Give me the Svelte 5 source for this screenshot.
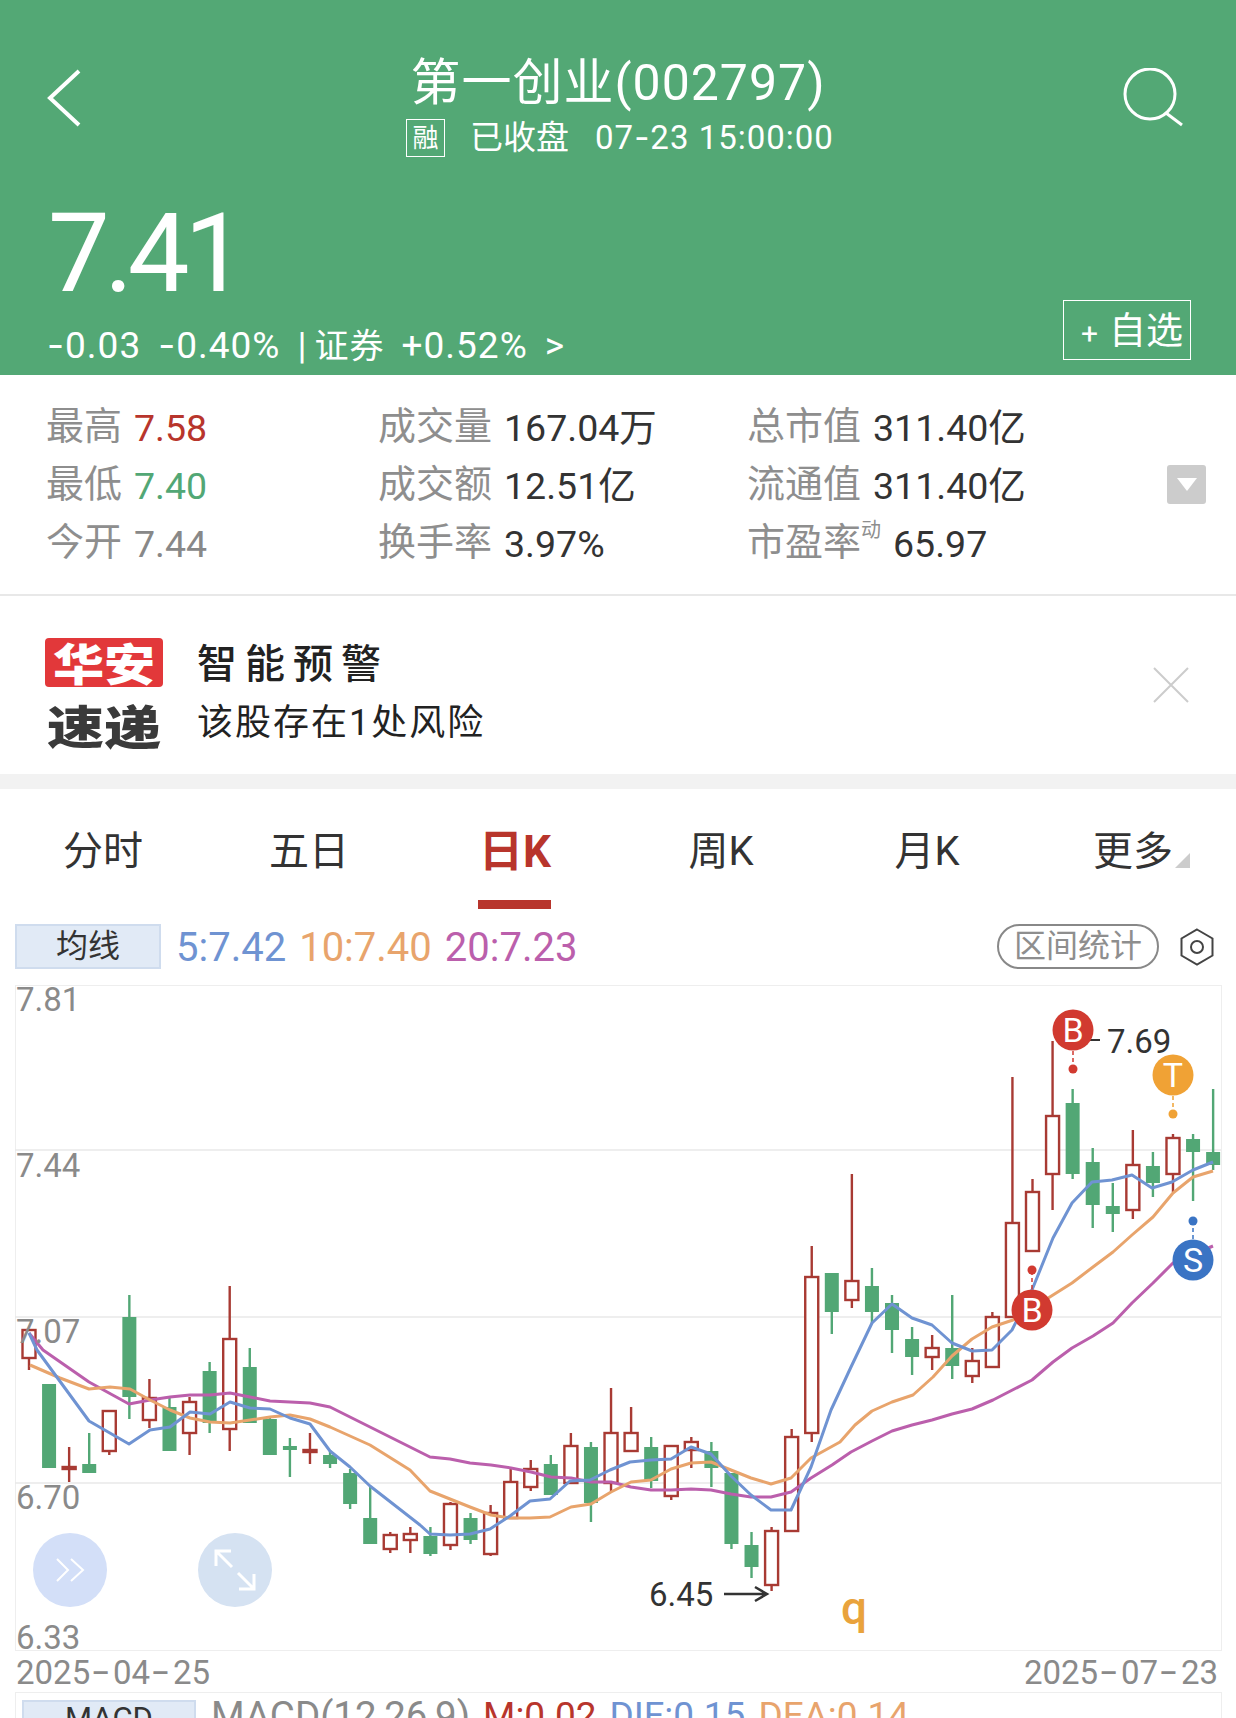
<script>
  // x position of candle i on the 20px grid
  const cx = (i) => 29 + 20.07 * i;

  // [up, wickTop, bodyTop, bodyBottom, wickBottom]
  const candles = [
    [1, 1330, 1330, 1358, 1370], [0, 1384, 1384, 1468, 1468], [1, 1447, 1467, 1469, 1482], [0, 1433, 1464, 1473, 1473],
    [1, 1411, 1411, 1451, 1455], [0, 1295, 1317, 1397, 1419], [1, 1379, 1398, 1420, 1428], [0, 1398, 1407, 1451, 1451],
    [1, 1397, 1402, 1433, 1455], [0, 1362, 1371, 1423, 1433], [1, 1286, 1339, 1429, 1451], [0, 1348, 1367, 1423, 1423],
    [0, 1416, 1419, 1455, 1455], [0, 1438, 1446, 1450, 1477], [1, 1433, 1450, 1452, 1464], [0, 1450, 1455, 1464, 1468],
    [0, 1469, 1473, 1504, 1509], [0, 1487, 1518, 1544, 1544], [1, 1532, 1535, 1549, 1553], [1, 1527, 1534, 1540, 1553],
    [0, 1527, 1536, 1554, 1556], [1, 1502, 1504, 1545, 1550], [0, 1513, 1518, 1540, 1544], [1, 1505, 1513, 1554, 1556],
    [1, 1469, 1482, 1518, 1518], [1, 1460, 1469, 1487, 1491], [0, 1455, 1464, 1495, 1495], [1, 1433, 1446, 1483, 1483],
    [0, 1442, 1447, 1503, 1522], [1, 1388, 1433, 1483, 1491], [1, 1407, 1433, 1451, 1451], [0, 1437, 1447, 1481, 1488],
    [1, 1446, 1446, 1496, 1500], [1, 1437, 1442, 1450, 1468], [0, 1442, 1451, 1468, 1487], [0, 1473, 1473, 1544, 1549],
    [0, 1532, 1545, 1567, 1578], [1, 1527, 1531, 1585, 1591], [1, 1429, 1437, 1531, 1531], [1, 1246, 1277, 1433, 1442],
    [0, 1273, 1273, 1312, 1334], [1, 1174, 1281, 1300, 1308], [0, 1268, 1286, 1312, 1323], [0, 1295, 1303, 1330, 1353],
    [0, 1327, 1339, 1357, 1375], [1, 1335, 1348, 1357, 1370], [0, 1295, 1348, 1366, 1379], [1, 1348, 1361, 1376, 1383],
    [1, 1312, 1317, 1367, 1367], [1, 1077, 1223, 1317, 1317], [1, 1179, 1192, 1251, 1251], [1, 1041, 1116, 1174, 1210],
    [0, 1089, 1103, 1174, 1179], [0, 1148, 1162, 1205, 1228], [0, 1183, 1206, 1214, 1232], [1, 1130, 1165, 1210, 1219],
    [0, 1152, 1166, 1183, 1197], [1, 1134, 1138, 1174, 1192], [0, 1134, 1139, 1152, 1201], [0, 1089, 1152, 1165, 1170],
  ];

  const ma5 = "29,1333 37,1350 89,1421 129,1444 150,1430 170,1427 190,1412 210,1414 230,1402 250,1408 270,1409 290,1418 310,1424 330,1451 350,1467 370,1486 420,1525 430,1534 450,1535 470,1534 490,1529 510,1516 530,1501 550,1499 570,1481 590,1480 610,1470 630,1462 651,1460 671,1459 691,1447 711,1454 731,1476 751,1495 771,1510 791,1510 811,1467 831,1410 851,1367 872,1323 892,1304 912,1318 932,1325 952,1343 972,1351 992,1350 1012,1330 1032,1290 1053,1238 1072,1203 1092,1182 1112,1180 1132,1175 1152,1188 1172,1182 1193,1170 1213,1162";
  const ma10 = "30,1365 60,1378 89,1389 110,1387 130,1389 150,1400 170,1410 190,1418 210,1422 230,1423 250,1420 270,1417 290,1415 310,1419 330,1427 350,1436 370,1445 410,1470 430,1491 450,1499 470,1507 491,1515 510,1518 530,1518 550,1517 571,1507 591,1504 611,1492 631,1482 651,1480 671,1469 691,1463 711,1462 731,1470 751,1478 771,1484 791,1478 811,1458 840,1442 855,1425 872,1411 892,1402 913,1395 933,1377 952,1356 972,1339 992,1327 1013,1320 1053,1295 1072,1283 1093,1267 1113,1252 1132,1235 1153,1217 1173,1193 1193,1177 1213,1171";
  const ma20 = "29,1333 43,1350 89,1382 129,1404 150,1400 170,1397 190,1395 210,1395 230,1393 250,1397 270,1401 290,1402 310,1403 330,1407 350,1417 370,1427 390,1437 420,1452 430,1457 450,1459 470,1463 491,1465 511,1468 531,1472 551,1477 571,1478 591,1482 611,1482 631,1487 651,1490 671,1490 691,1489 711,1490 731,1494 751,1497 771,1497 791,1492 811,1478 832,1465 851,1452 872,1441 892,1431 912,1425 932,1420 952,1414 972,1409 993,1400 1032,1380 1053,1362 1072,1348 1093,1336 1113,1323 1132,1303 1153,1283 1173,1263 1213,1246";

  // chart svg starts at page y 975
  const top = 975;
  const axis = [["7.81", 1011], ["7.44", 1177], ["7.07", 1343], ["6.70", 1509], ["6.33", 1649]];
  const grid = [1150, 1317, 1483];
  const markers = [
    { x: 1073, y: 1030, dot: 1069, fill: "#d13a30", t: "B" },
    { x: 1173, y: 1075, dot: 1114, fill: "#f0a235", t: "T" },
    { x: 1193, y: 1260, dot: 1221, fill: "#3a74c4", t: "S" },
    { x: 1032, y: 1310, dot: 1270, fill: "#d13a30", t: "B" },
  ];

  const stats = [
    [{ l: "最高", v: "7.58", c: "up" }, { l: "成交量", v: "167.04万" }, { l: "总市值", v: "311.40亿" }],
    [{ l: "最低", v: "7.40", c: "down" }, { l: "成交额", v: "12.51亿" }, { l: "流通值", v: "311.40亿" }],
    [{ l: "今开", v: "7.44", c: "flat" }, { l: "换手率", v: "3.97%" }, { l: "市盈率", s: "动", v: "65.97" }],
  ];
  const tabs = ["分时", "五日", "日K", "周K", "月K", "更多"];
</script>

<div class="page">
  <header class="head">
    <div class="nav">
      <svg class="back" width="34" height="58" viewBox="0 0 34 58"><path d="M32 2 L3 29 L32 56" fill="none" stroke="#fff" stroke-width="4" /></svg>
      <div class="title">
        <div class="name">第一创业(002797)</div>
        <div class="sub"><span class="rong">融</span><span class="closed">已收盘</span><span class="time">07<span class="dash">-</span>23 15:00:00</span></div>
      </div>
      <svg class="search" width="62" height="60" viewBox="0 0 62 60"><circle cx="27" cy="26" r="25" fill="none" stroke="#fff" stroke-width="3" /><path d="M43 45 L59 57" stroke="#fff" stroke-width="3" /></svg>
    </div>
    <div class="price">7.41</div>
    <div class="change">
      <div class="delta">
        <span><span class="dash">-</span>0.03</span><span><span class="dash">-</span>0.40%</span><span class="sep">|</span><span class="sec">证券</span><span>+0.52%</span><span class="gt">&gt;</span>
      </div>
      <div class="add"><span class="plus">+</span>自选</div>
    </div>
  </header>

  <section class="stats">
    {#each stats as row}
      {#each row as s, i}
        <div class="stat col{i}">
          <span class="lab">{s.l}{#if s.s}<sup>{s.s}</sup>{/if}</span>
          <span class="val {s.c || ''}">{s.v}</span>
        </div>
      {/each}
    {/each}
    <div class="drop"><i></i></div>
  </section>

  <section class="ad">
    <div class="logo">
      <div class="hua"><span>华安</span></div>
      <div class="su"><span>速递</span></div>
    </div>
    <div class="ad-text">
      <div class="ad-h">智能预警</div>
      <div class="ad-s">该股存在1处风险</div>
    </div>
    <svg class="close" width="36" height="36" viewBox="0 0 36 36"><path d="M1 1 L35 35 M35 1 L1 35" stroke="#ccc" stroke-width="2" /></svg>
  </section>

  <nav class="tabs">
    {#each tabs as t, i}
      <div class="tab" class:on={i === 2}>{t}{#if i === 5}<b class="corner"></b>{/if}</div>
    {/each}
  </nav>

  <div class="ma">
    <div class="ma-btn">均线</div>
    <span class="m5">5:7.42</span><span class="m10">10:7.40</span><span class="m20">20:7.23</span>
    <div class="range">区间统计</div>
    <svg class="hex" width="34" height="38" viewBox="0 0 34 38"><path d="M17 1.5 L32.5 10.5 L32.5 27.5 L17 36.5 L1.5 27.5 L1.5 10.5 Z" fill="none" stroke="#444" stroke-width="2" /><circle cx="17" cy="19" r="6" fill="none" stroke="#444" stroke-width="2" /></svg>
  </div>

  <div class="chart">
    <svg width="1236" height="743" viewBox="0 {top} 1236 743">
      <rect x="15.5" y="985.5" width="1206" height="665" fill="none" stroke="#eee" />
      <rect x="15.5" y="1692.5" width="1206" height="60" fill="none" stroke="#eee" />
      {#each grid as y}
        <line x1="15" x2="1221" y1={y} y2={y} stroke="#e8e8e8" stroke-width="1.5" />
      {/each}

      {#each candles as c, i}
        {#if c[0]}
          <line x1={cx(i)} x2={cx(i)} y1={c[1]} y2={c[4]} stroke="#a83a33" stroke-width="2.4" />
          <rect x={cx(i) - 6.5} y={c[2]} width="13" height={c[3] - c[2]} fill="#fff" stroke="#a83a33" stroke-width="2.4" />
        {:else}
          <line x1={cx(i)} x2={cx(i)} y1={c[1]} y2={c[4]} stroke="#52a775" stroke-width="2.4" />
          <rect x={cx(i) - 7} y={c[2]} width="14" height={c[3] - c[2]} fill="#52a775" />
        {/if}
      {/each}

      <polyline points={ma20} fill="none" stroke="#bb5fac" stroke-width="3" stroke-linejoin="round" />
      <polyline points={ma10} fill="none" stroke="#e8a46c" stroke-width="3" stroke-linejoin="round" />
      <polyline points={ma5} fill="none" stroke="#6f93d2" stroke-width="3" stroke-linejoin="round" />

      {#each axis as a}
        <text x="16" y={a[1]} class="ax">{a[0]}</text>
      {/each}

      <line x1="1090" x2="1100" y1="1040" y2="1040" stroke="#333" stroke-width="2" />
      <text x="1107" y="1053" class="mark">7.69</text>
      <text x="649" y="1606" class="mark">6.45</text>
      <path d="M724 1594 L766 1594 M755 1587 L767 1594 L755 1601" fill="none" stroke="#333" stroke-width="2.5" />

      {#each markers as m}
        <line x1={m.x} x2={m.x} y1={m.y} y2={m.dot} stroke={m.fill} stroke-width="1.5" stroke-dasharray="4 3" />
        <circle cx={m.x} cy={m.dot} r="4.5" fill={m.fill} />
        <circle cx={m.x} cy={m.y} r="20.5" fill={m.fill} />
        <text x={m.x} y={m.y + 12} class="badge" text-anchor="middle">{m.t}</text>
      {/each}

      <text x="854" y="1624" class="q" text-anchor="middle">q</text>

      <text x="16" y="1684" class="ax">2025<tspan class="dash wide">-</tspan>04<tspan class="dash wide">-</tspan>25</text>
      <text x="1218" y="1684" class="ax" text-anchor="end">2025<tspan class="dash wide">-</tspan>07<tspan class="dash wide">-</tspan>23</text>
    </svg>

    <div class="round r1">
      <svg width="32" height="28" viewBox="0 0 32 28"><path d="M3 3 L14 14 L3 25 M17 3 L29 14 L17 25" fill="none" stroke="#fff" stroke-width="2" /></svg>
    </div>
    <div class="round r2">
      <svg width="44" height="44" viewBox="0 0 44 44"><path d="M3 18 L3 3 L18 3 M3 3 L19 19 M41 26 L41 41 L26 41 M41 41 L25 25" fill="none" stroke="#fff" stroke-width="3" /></svg>
    </div>

    <div class="macd">
      <div class="ma-btn">MACD</div>
      <span class="mg">MACD(12,26,9)</span><span class="mr">M:0.02</span><span class="mb">DIF:0.15</span><span class="mo">DEA:0.14</span>
    </div>
  </div>
</div>

<style>
  :global(body) {
    margin: 0;
    background: #fff;
  }
  .page {
    width: 1236px;
    height: 1718px;
    overflow: hidden;
    font-family: Roboto, "Noto Sans CJK SC", sans-serif;
    color: #333;
  }
  .dash {
    font-family: Inter, sans-serif;
  }
  .dash.wide {
    font-size: 46px;
    font-weight: 300;
    letter-spacing: 2px;
    baseline-shift: -3px;
  }

  .head {
    height: 375px;
    box-sizing: border-box;
    background: #53a875;
    color: #fff;
    padding: 0 45px 0 47px;
    display: flex;
    flex-direction: column;
  }
  .nav {
    display: flex;
    align-items: flex-start;
    justify-content: space-between;
    padding-top: 54px;
    height: 158px;
    box-sizing: border-box;
  }
  .back {
    margin-top: 15px;
  }
  .search {
    margin-top: 14px;
    margin-right: 6px;
  }
  .title {
    display: flex;
    flex-direction: column;
    align-items: center;
    margin-left: 32px;
  }
  .name {
    font-size: 50px;
    line-height: 58px;
    letter-spacing: 1px;
  }
  .sub {
    display: flex;
    align-items: center;
    font-size: 33px;
    line-height: 38px;
    margin-top: 6px;
    margin-left: 4px;
  }
  .rong {
    width: 39px;
    height: 38px;
    box-sizing: border-box;
    border: 1px solid #fff;
    font-size: 26px;
    line-height: 36px;
    text-align: center;
    margin-right: 25px;
  }
  .time {
    margin-left: 26px;
    letter-spacing: 1px;
  }
  .price {
    font-size: 110px;
    line-height: 110px;
    letter-spacing: -5.5px;
    margin-top: 41px;
    margin-left: 1px;
  }
  .change {
    display: flex;
    justify-content: space-between;
    align-items: flex-end;
    height: 60px;
    margin-top: -9px;
  }
  .delta {
    display: flex;
    align-items: center;
    font-size: 37px;
    line-height: 44px;
    gap: 17px;
    letter-spacing: 1px;
    margin-bottom: -8px;
  }
  .sep {
    margin-right: -10px;
  }
  .sec {
    font-size: 34px;
  }
  .add {
    width: 128px;
    height: 60px;
    box-sizing: border-box;
    border: 1px solid #fff;
    font-size: 37px;
    line-height: 58px;
    padding-top: 2px;
    text-align: right;
    padding-right: 7px;
    white-space: nowrap;
  }
  .plus {
    font-size: 30px;
    margin-right: 11px;
  }

  .stats {
    position: relative;
    height: 221px;
    box-sizing: border-box;
    border-bottom: 2px solid #e8e8e8;
    padding: 24px 0 0 46px;
    display: grid;
    grid-template-columns: 332px 369px 1fr;
    grid-auto-rows: 58px;
    font-size: 38px;
  }
  .stat {
    display: flex;
    align-items: baseline;
    white-space: nowrap;
    line-height: 58px;
  }
  .lab {
    color: #8e8e8e;
    margin-right: 12px;
    position: relative;
    top: -2px;
  }
  .lab sup {
    font-size: 20px;
    line-height: 0;
    vertical-align: 18px;
  }
  .val {
    color: #333;
    font-size: 37.5px;
  }
  .val.up {
    color: #b8352c;
  }
  .val.down {
    color: #52a775;
  }
  .val.flat {
    color: #888;
  }
  .drop {
    position: absolute;
    right: 30px;
    top: 90px;
    width: 39px;
    height: 39px;
    border-radius: 3px;
    background: #ccc;
    display: flex;
    align-items: center;
    justify-content: center;
  }
  .drop i {
    border-style: solid;
    border-width: 13px 10px 0;
    border-color: #fff transparent transparent;
  }

  .ad {
    height: 193px;
    box-sizing: border-box;
    border-bottom: 15px solid #f2f2f2;
    display: flex;
    align-items: center;
    padding: 16px 47px 0 45px;
  }
  .logo {
    width: 118px;
    font-family: "Noto Sans CJK SC", sans-serif;
    font-weight: 900;
    text-align: center;
    margin-top: -3px;
  }
  .hua {
    height: 49px;
    line-height: 48px;
    background: #e2383a;
    color: #fff;
    border-radius: 4px;
    font-size: 44px;
  }
  .su {
    height: 42px;
    line-height: 42px;
    margin-top: 16px;
    color: #3a3a3a;
    font-size: 46px;
    white-space: nowrap;
  }
  .hua span,
  .su span {
    display: inline-block;
    transform: scaleX(1.16);
  }
  .su span {
    transform: scaleX(1.24);
  }
  .ad-text {
    margin-left: 34px;
    flex: 1;
    color: #222;
  }
  .ad-h {
    font-size: 40px;
    line-height: 48px;
    letter-spacing: 8px;
    font-weight: 500;
  }
  .ad-s {
    font-size: 36px;
    line-height: 44px;
    margin-top: 12px;
    letter-spacing: 2px;
  }
  .close {
    margin-top: -16px;
  }

  .tabs {
    display: grid;
    grid-template-columns: repeat(6, 1fr);
    height: 135px;
    box-sizing: border-box;
    padding-bottom: 15px;
  }
  .tab {
    position: relative;
    font-size: 40px;
    line-height: 126px;
    text-align: center;
    color: #333;
  }
  .tab.on {
    color: #b8352c;
    font-weight: 700;
    font-size: 44px;
  }
  .tab.on::after {
    content: "";
    position: absolute;
    top: 111px;
    left: 66px;
    width: 73px;
    height: 9px;
    background: #b8352c;
  }
  .corner {
    position: absolute;
    right: 46px;
    top: 64px;
    border-style: solid;
    border-width: 0 0 15px 15px;
    border-color: transparent transparent #ccc;
  }

  .ma {
    height: 51px;
    display: flex;
    align-items: flex-start;
    padding-left: 15px;
    font-size: 40px;
    line-height: 47px;
  }
  .ma-btn {
    width: 146px;
    height: 45px;
    box-sizing: border-box;
    background: #e1eaf6;
    border: 2px solid #cfdcee;
    color: #333;
    font-size: 32px;
    line-height: 41px;
    text-align: center;
    margin-right: 15px;
  }
  .m5 {
    color: #6f93d2;
  }
  .m10 {
    color: #e8a46c;
    margin-left: 13px;
  }
  .m20 {
    color: #bb5fac;
    margin-left: 13px;
  }
  .range {
    margin-left: auto;
    width: 162px;
    height: 45px;
    box-sizing: border-box;
    border: 2px solid #888;
    border-radius: 23px;
    color: #8e8e8e;
    font-size: 32px;
    line-height: 41px;
    text-align: center;
    margin-right: 21px;
  }
  .hex {
    margin-right: 22px;
    margin-top: 4px;
  }

  .chart {
    position: relative;
    height: 743px;
  }
  .chart svg {
    display: block;
  }
  .ax {
    font-family: Roboto, sans-serif;
    font-size: 33px;
    fill: #8a8a8a;
  }
  .mark {
    font-family: Roboto, sans-serif;
    font-size: 33px;
    fill: #333;
  }
  .badge {
    font-family: Roboto, sans-serif;
    font-size: 34px;
    fill: #fff;
  }
  .q {
    font-family: Roboto, sans-serif;
    font-size: 46px;
    font-weight: 500;
    fill: #e9a33c;
  }
  .round {
    position: absolute;
    top: 558px;
    width: 74px;
    height: 74px;
    border-radius: 50%;
    display: flex;
    align-items: center;
    justify-content: center;
  }
  .r1 {
    left: 33px;
    background: #d3dff8;
  }
  .r2 {
    left: 198px;
    background: #d5e2f2;
  }
  .macd {
    position: absolute;
    left: 22px;
    top: 725px;
    display: flex;
    white-space: nowrap;
    font-size: 37px;
    line-height: 32px;
    gap: 13px;
  }
  .macd .ma-btn {
    width: 174px;
    margin-right: 2px;
    font-size: 31px;
    line-height: 33px;
  }
  .mg {
    color: #8a8a8a;
    font-size: 38.5px;
  }
  .mr {
    color: #b8352c;
  }
  .mb {
    color: #6f93d2;
  }
  .mo {
    color: #e8a46c;
  }
</style>
